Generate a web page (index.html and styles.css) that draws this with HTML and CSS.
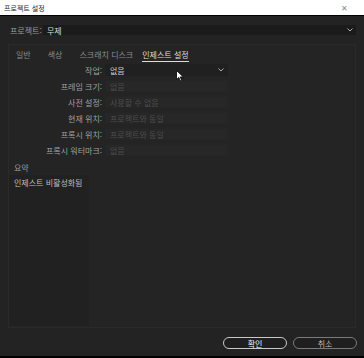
FILE: index.html
```html
<!DOCTYPE html>
<html lang="ko">
<head>
    <meta charset="UTF-8">
    <title>프로젝트 설정</title>
    <link rel="stylesheet" href="styles.css">
</head>
<body>
    <div class="titlebar">
        <span class="title">프로젝트 설정</span>
        <span class="close">✕</span>
    </div>

    <div class="dialog">
        <div class="project-row">
            <span class="project-label">프로젝트:</span>
            <div class="project-select">
                <span>무제</span>
                <svg class="chev" width="6" height="4" viewBox="0 0 6 4"><path d="M0.5 0.5 L3 3 L5.5 0.5" fill="none" stroke="#aaa" stroke-width="1"/></svg>
            </div>
        </div>

        <div class="panel">
            <div class="tabs">
                <span class="tab">일반</span>
                <span class="tab">색상</span>
                <span class="tab">스크래치 디스크</span>
                <span class="tab active">인제스트 설정</span>
            </div>

            <div class="form">
                <div class="row">
                    <span class="label">작업:</span>
                    <div class="field on">
                        <span>없음</span>
                        <svg class="chev" width="6" height="4" viewBox="0 0 6 4"><path d="M0.5 0.5 L3 3 L5.5 0.5" fill="none" stroke="#aaa" stroke-width="1"/></svg>
                    </div>
                </div>
                <div class="row">
                    <span class="label">프레임 크기:</span>
                    <div class="field"><span>없음</span></div>
                </div>
                <div class="row">
                    <span class="label">사전 설정:</span>
                    <div class="field"><span>사용할 수 없음</span></div>
                </div>
                <div class="row">
                    <span class="label">현재 위치:</span>
                    <div class="field"><span>프로젝트와 동일</span></div>
                </div>
                <div class="row">
                    <span class="label">프록시 위치:</span>
                    <div class="field"><span>프로젝트와 동일</span></div>
                </div>
                <div class="row">
                    <span class="label">프록시 워터마크:</span>
                    <div class="field"><span>없음</span></div>
                </div>
            </div>

            <div class="summary-title">요약</div>
            <div class="summary">
                <div class="summary-text">인제스트 비활성화됨</div>
            </div>
        </div>

        <div class="buttons">
            <button class="btn primary">확인</button>
            <button class="btn">취소</button>
        </div>
    </div>

    <svg class="cursor" width="8" height="12" viewBox="0 0 8 12"><path d="M0.5 0.5 L0.5 9.5 L2.8 7.4 L4.4 11 L5.8 10.4 L4.2 6.9 L7.3 6.9 Z" fill="#fff" stroke="#000" stroke-width="0.8"/></svg>
</body>
</html>
```

FILE: styles.css
```css
body {
    margin: 0;
    width: 364px;
    height: 358px;
    background-color: #232323;
    font-family: "Noto Sans CJK KR", "Noto Sans", sans-serif;
    font-size: 8px;
    color: #a8a8a8;
    overflow: hidden;
    position: relative;
}
.titlebar {
    height: 15px;
    background-color: #fff;
    border-bottom: 1px solid #000;
    display: flex;
    align-items: center;
    justify-content: space-between;
    padding: 0 16px 0 4px;
}
.title {
    color: #2a2a2a;
    font-size: 7px;
}
.close {
    color: #888;
    font-size: 8px;
}
.dialog {
    height: 340px;
    border-bottom: 2px solid #000;
    display: flex;
    flex-direction: column;
}
.project-row {
    display: flex;
    align-items: center;
    margin: 9px 8px 0 10px;
    height: 10px;
}
.project-label {
    width: 33px;
    color: #9a9a9a;
}
.project-select {
    flex: 1;
    height: 10px;
    background-color: #1b1b1b;
    display: flex;
    align-items: center;
    justify-content: space-between;
    padding: 0 3px 0 4px;
    color: #d8d8d8;
}
.panel {
    margin: 9px 8px 0 8px;
    height: 282px;
    background-color: #242424;
    border: 1px solid #2a2a2a;
    display: flex;
    flex-direction: column;
}
.tabs {
    display: flex;
    gap: 17px;
    padding: 4px 0 0 7px;
    height: 14px;
}
.tab {
    color: #8c8c8c;
    line-height: 12px;
}
.tab.active {
    margin-left: -8px;
    color: #dcdcdc;
    border-bottom: 1px solid #dcdcdc;
    height: 12px;
}
.form {
    display: flex;
    flex-direction: column;
    gap: 6px;
    margin-top: 2px;
}
.row {
    display: flex;
    align-items: center;
    height: 10px;
}
.label {
    width: 93px;
    text-align: right;
    padding-right: 3px;
    color: #a0a0a0;
}
.field {
    width: 114px;
    height: 10px;
    background-color: #272727;
    border: 1px solid #252525;
    display: flex;
    align-items: center;
    justify-content: space-between;
    padding: 0 3px 0 4px;
    color: #4c4c4c;
}
.field.on {
    background-color: #202020;
    border-color: #202020;
    color: #cfcfcf;
}
.summary-title {
    margin: 7px 0 0 5px;
    color: #9a9a9a;
}
.summary {
    margin: 2px 0 1px 0;
    width: 80px;
    flex: 1;
    background-color: #212121;
}
.summary-text {
    padding: 2px 0 0 5px;
    color: #bdbdbd;
}
.buttons {
    display: flex;
    justify-content: flex-end;
    gap: 6px;
    margin: 9px 7px 0 0;
}
.btn {
    width: 64px;
    height: 12px;
    border-radius: 6px;
    background-color: #1f1f1f;
    border: 1px solid #7a7a7a;
    color: #bbb;
    font-family: inherit;
    font-size: 8px;
    line-height: 9px;
    padding: 0;
}
.btn.primary {
    border-color: #c8c8c8;
    color: #f0f0f0;
}
.cursor {
    position: absolute;
    left: 176px;
    top: 70px;
}
```
